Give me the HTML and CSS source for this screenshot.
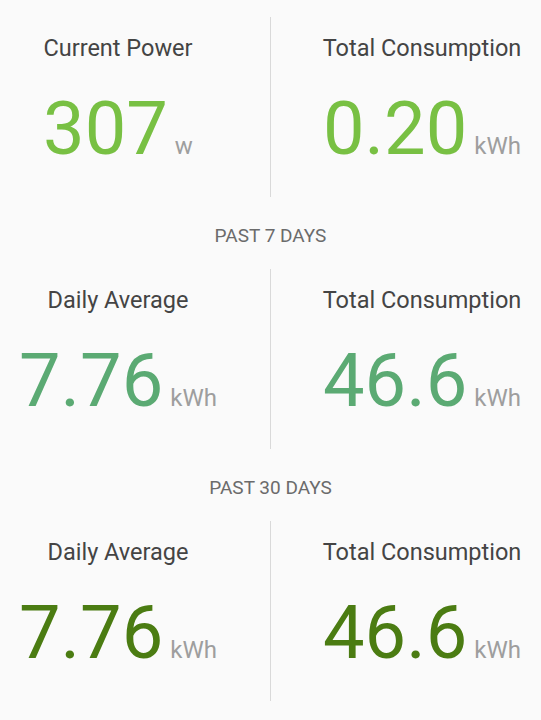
FILE: index.html
```html
<!DOCTYPE html>
<html>
<head>
    <title>Energy Usage</title>
    <link rel="stylesheet" href="styles.css">
</head>
<body>
    <div class="usage">
        <!-- Now -->
        <div class="stat-row">
            <div class="stat stat-left">
                <div class="stat-label">Current Power</div>
                <div class="stat-value now">307<span class="stat-unit">w</span></div>
            </div>
            <div class="stat stat-right">
                <div class="stat-label">Total Consumption</div>
                <div class="stat-value now">0.20<span class="stat-unit">kWh</span></div>
            </div>
        </div>

        <div class="period">PAST 7 DAYS</div>
        <div class="stat-row">
            <div class="stat stat-left">
                <div class="stat-label">Daily Average</div>
                <div class="stat-value week">7.76<span class="stat-unit">kWh</span></div>
            </div>
            <div class="stat stat-right">
                <div class="stat-label">Total Consumption</div>
                <div class="stat-value week">46.6<span class="stat-unit">kWh</span></div>
            </div>
        </div>

        <div class="period">PAST 30 DAYS</div>
        <div class="stat-row">
            <div class="stat stat-left">
                <div class="stat-label">Daily Average</div>
                <div class="stat-value month">7.76<span class="stat-unit">kWh</span></div>
            </div>
            <div class="stat stat-right">
                <div class="stat-label">Total Consumption</div>
                <div class="stat-value month">46.6<span class="stat-unit">kWh</span></div>
            </div>
        </div>
    </div>
</body>
</html>
```

FILE: styles.css
```css
body {
    font-family: Roboto, "Liberation Sans", sans-serif;
    margin: 0;
    padding: 0;
    background-color: #fafafa;
}

.usage {
    padding-top: 17px;
}

.stat-row {
    display: grid;
    grid-template-columns: 270px 1fr;
}

.stat {
    text-align: center;
    padding-top: 17px;
    padding-bottom: 30px;
}

.stat-left {
    padding-right: 34px;
}

.stat-right {
    padding-left: 32px;
    border-left: 1px solid #d9d9d9;
}

.stat-label {
    font-size: 23.5px;
    line-height: 28px;
    color: #444444;
}

.stat-value {
    font-size: 74px;
    line-height: 76px;
    margin-top: 29px;
    white-space: nowrap;
}

.stat-unit {
    font-size: 24px;
    line-height: 24px;
    color: #9e9e9e;
    margin-left: 7px;
}

.now {
    color: #78c043;
}

.week {
    color: #5baa73;
}

.month {
    color: #4b7c12;
}

.period {
    text-align: center;
    font-size: 19px;
    line-height: 24px;
    color: #6b6b6b;
    margin-top: 27px;
    margin-bottom: 21px;
}
```
